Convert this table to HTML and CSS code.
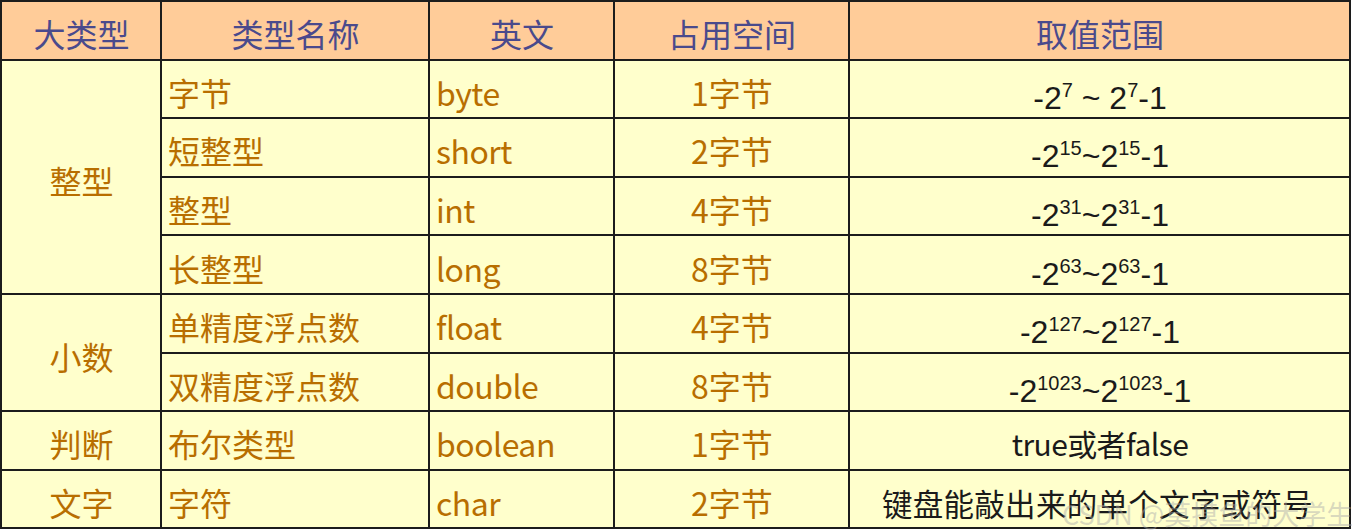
FILE: index.html
```html
<!DOCTYPE html>
<html lang="zh">
<head>
<meta charset="utf-8">
<link rel="stylesheet" href="styles.css">
</head>
<body>
<div class="wrap">
<table class="types">
  <colgroup>
    <col class="c1"><col class="c2"><col class="c3"><col class="c4"><col class="c5">
  </colgroup>
  <thead>
    <tr>
      <th>大类型</th><th>类型名称</th><th>英文</th><th>占用空间</th><th>取值范围</th>
    </tr>
  </thead>
  <tbody>
    <tr>
      <td class="cat" rowspan="4">整型</td><td class="name">字节</td><td class="en">byte</td><td class="size">1字节</td>
      <td class="range">-2<sup>7</sup> ~ 2<sup>7</sup>-1</td>
    </tr>
    <tr>
      <td class="name">短整型</td><td class="en">short</td><td class="size">2字节</td>
      <td class="range">-2<sup>15</sup>~2<sup>15</sup>-1</td>
    </tr>
    <tr>
      <td class="name">整型</td><td class="en">int</td><td class="size">4字节</td>
      <td class="range">-2<sup>31</sup>~2<sup>31</sup>-1</td>
    </tr>
    <tr>
      <td class="name">长整型</td><td class="en">long</td><td class="size">8字节</td>
      <td class="range">-2<sup>63</sup>~2<sup>63</sup>-1</td>
    </tr>
    <tr>
      <td class="cat" rowspan="2">小数</td><td class="name">单精度浮点数</td><td class="en">float</td><td class="size">4字节</td>
      <td class="range">-2<sup>127</sup>~2<sup>127</sup>-1</td>
    </tr>
    <tr>
      <td class="name">双精度浮点数</td><td class="en">double</td><td class="size">8字节</td>
      <td class="range">-2<sup>1023</sup>~2<sup>1023</sup>-1</td>
    </tr>
    <tr>
      <td class="cat">判断</td><td class="name">布尔类型</td><td class="en">boolean</td><td class="size">1字节</td>
      <td class="range text">true或者false</td>
    </tr>
    <tr>
      <td class="cat">文字</td><td class="name">字符</td><td class="en">char</td><td class="size">2字节</td>
      <td class="range text wide">键盘能敲出来的单个文字或符号</td>
    </tr>
  </tbody>
</table>
<div class="watermark">CSDN @莫摸鱼的大学生</div>
</div>
</body>
</html>
```

FILE: styles.css
```css
html, body {
  margin: 0;
  padding: 0;
  background: #ffffff;
}

.wrap {
  position: relative;
  width: 1352px;
  height: 532px;
}

.types {
  border-collapse: collapse;
  width: 1351px;
  table-layout: fixed;
  font-family: "Noto Sans CJK SC", "Noto Sans", sans-serif;
  font-size: 32px;
  margin: 0;
}

.c1 { width: 160px; }
.c2 { width: 268px; }
.c3 { width: 185px; }
.c4 { width: 235px; }
.c5 { width: auto; }

.types th,
.types td {
  border: 2px solid #1c1c1c;
  height: 58.6px;
  padding: 6px 5px 0 6px;
  vertical-align: middle;
  line-height: 1;
  white-space: nowrap;
  box-sizing: border-box;
}

.types th {
  background: #ffcc99;
  color: #4a4a8c;
  font-weight: normal;
  text-align: center;
}

.types td {
  background: #ffffcc;
  color: #b86e00;
}

.cat { text-align: center; }
.name { text-align: left; }
.en { text-align: left; letter-spacing: -0.5px; }
.size { text-align: center; }

.types td.range {
  text-align: center;
  color: #1a1a1a;
  font-family: "Liberation Sans", "Noto Sans CJK SC", sans-serif;
  font-size: 32px;
  padding-top: 18px;
}

.types td.range.text {
  font-family: "Noto Sans CJK SC", sans-serif;
  font-size: 30px;
  letter-spacing: -0.6px;
  padding-top: 6px;
}

.types td.range.wide {
  font-size: 30.5px;
  letter-spacing: 0.3px;
  padding-top: 8px;
  padding-right: 10px;
}

.range sup {
  font-size: 20px;
  line-height: 0;
  vertical-align: 12px;
}

.watermark {
  position: absolute;
  left: 1062px;
  top: 494px;
  font-family: "Noto Sans CJK SC", sans-serif;
  font-size: 27px;
  color: rgba(170, 170, 170, 0.45);
  white-space: nowrap;
  pointer-events: none;
}
```
